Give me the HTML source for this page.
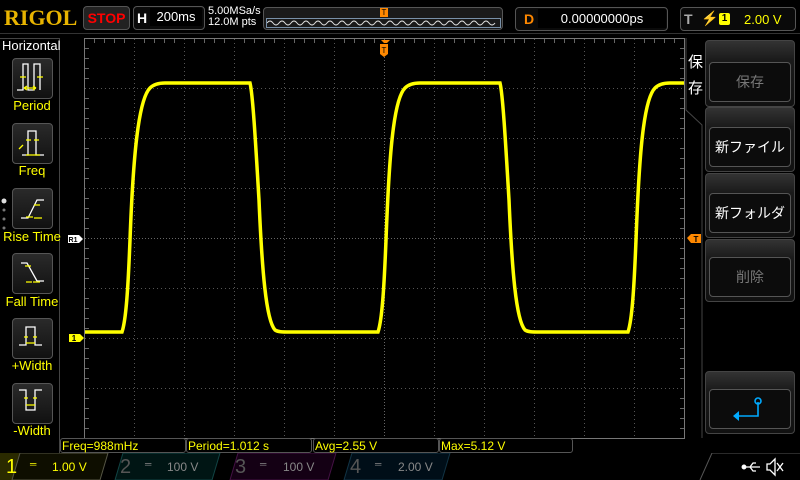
<!DOCTYPE html>
<html><head><meta charset="utf-8"><style>
body{margin:0;width:800px;height:480px;background:#000;overflow:hidden;position:relative;font-family:"Liberation Sans","Noto Sans CJK JP",sans-serif;}
.a{position:absolute;}
.box{position:absolute;border:1px solid #555;border-radius:4px;background:#0a0a0a;}
.lbtn{position:absolute;left:12px;width:39px;height:39px;border:1px solid #555;border-radius:4px;background:linear-gradient(#2a2a2a,#111);}
.llab{position:absolute;left:0;width:64px;text-align:center;color:#ff0;font-size:13px;}
.rbtn{position:absolute;left:705px;width:88px;border:1px solid #444;border-radius:4px;background:linear-gradient(#333,#1a1a1a 30%,#111);}
.rin{position:absolute;left:3px;right:3px;bottom:4px;height:38px;border:1px solid #555;border-radius:4px;background:#0c0c0c;color:#fff;font-size:14px;text-align:center;line-height:38px;}
.meas{position:absolute;top:438px;height:15px;border:1px solid #555;border-radius:3px;color:#ff0;font-size:12px;line-height:15px;padding-left:1px;box-sizing:border-box;}
.ch{position:absolute;top:455px;height:25px;font-size:12px;line-height:25px;}
</style></head><body>
<div class="a" style="left:4px;top:5px;color:#e8b400;font-family:'Liberation Serif',serif;font-weight:bold;font-size:22px;">RIGOL</div>
<div class="box" style="left:83px;top:6px;width:45px;height:22px;background:#222;color:#f00;font-weight:bold;font-size:14px;text-align:center;line-height:22px;">STOP</div>
<div class="box" style="left:133px;top:6px;width:70px;height:22px;"><span class="a" style="left:3px;top:3px;color:#fff;font-weight:bold;font-size:14px;">H</span><div class="a" style="left:16px;top:1px;width:52px;height:18px;background:#000;color:#fff;font-size:13px;line-height:18px;text-align:center;">200ms</div></div>
<div class="a" style="left:208px;top:6px;color:#fff;font-size:11px;line-height:11px;">5.00MSa/s<br>12.0M pts</div>
<div class="box" style="left:263px;top:7px;width:238px;height:21px;background:#1a1a1a;"></div>
<div class="a" style="left:266px;top:18px;width:233px;height:8px;border:1px solid #7890a8;"></div>
<svg class="a" style="left:267px;top:19px" width="232" height="7"><path d="M0,4 q3,-4 6,0 t6,0 t6,0 t6,0 t6,0 t6,0 t6,0 t6,0 t6,0 t6,0 t6,0 t6,0 t6,0 t6,0 t6,0 t6,0 t6,0 t6,0 t6,0 t6,0 t6,0 t6,0 t6,0 t6,0 t6,0 t6,0 t6,0 t6,0 t6,0 t6,0 t6,0 t6,0 t6,0 t6,0 t6,0 t6,0 t6,0 t6,0" stroke="#ddd" fill="none" stroke-width="1"/></svg>
<div class="a" style="left:380px;top:8px;width:8px;height:9px;background:#f80;color:#000;font-size:8px;text-align:center;line-height:9px;">T</div>
<div class="box" style="left:515px;top:7px;width:151px;height:22px;"><span class="a" style="left:8px;top:3px;color:#f80;font-weight:bold;font-size:14px;">D</span><div class="a" style="left:22px;top:1px;width:128px;height:19px;background:#000;color:#fff;font-size:13px;line-height:19px;text-align:center;">0.00000000ps</div></div>
<div class="box" style="left:680px;top:7px;width:114px;height:22px;"><span class="a" style="left:3px;top:3px;color:#aaa;font-weight:bold;font-size:14px;">T</span><span class="a" style="left:20px;top:2px;color:#ff0;font-size:14px;">⚡</span><span class="a" style="left:38px;top:5px;width:11px;height:12px;background:#ff0;border-radius:2px;color:#000;font-size:10px;text-align:center;line-height:12px;font-weight:bold;">1</span><span class="a" style="left:63px;top:4px;color:#ff0;font-size:13px;">2.00 V</span></div>
<div class="a" style="left:0;top:33px;width:800px;height:1px;background:#333;"></div>
<div class="a" style="left:0;top:38px;width:59px;height:416px;border:1px solid #444;border-left:none;"></div>
<div class="a" style="left:2px;top:38px;color:#fff;font-size:13px;">Horizontal</div>
<div class="lbtn" style="top:58px"></div><div class="llab" style="top:98px">Period</div>
<div class="lbtn" style="top:123px"></div><div class="llab" style="top:163px">Freq</div>
<div class="lbtn" style="top:188px"></div><div class="llab" style="top:229px">Rise Time</div>
<div class="lbtn" style="top:253px"></div><div class="llab" style="top:294px">Fall Time</div>
<div class="lbtn" style="top:318px"></div><div class="llab" style="top:358px">+Width</div>
<div class="lbtn" style="top:383px"></div><div class="llab" style="top:423px">-Width</div>
<svg class="a" style="left:0;top:0" width="60" height="440" fill="none" stroke-width="1.3">
<path d="M17,90 H23 V64 H28 V90 H34 V64 H40 V90" stroke="#fff"/><path d="M20,77h6M37,77h6" stroke="#ff0"/><path d="M24,88h12M24,88l3,-2M24,88l3,2M36,88l-3,-2M36,88l-3,2" stroke="#ff0"/>
<path d="M22,155 H28 V131 H36 V155 H44" stroke="#fff"/><path d="M26,140h5M34,140h5M26,155h14" stroke="#ff0"/><path d="M19,149l4,-4" stroke="#ff0"/>
<path d="M21,218 H28 L37,200 H44" stroke="#fff"/><path d="M26,217h7M34,205h6M34,218h8" stroke="#ff0"/>
<path d="M21,263 H27 L37,281 H44" stroke="#fff"/><path d="M25,266h6M33,282h7M26,282h6" stroke="#ff0"/>
<path d="M19,345 H26 V327 H35 V345 H42" stroke="#fff"/><path d="M24,337h4M33,337h4M26,343h9" stroke="#ff0"/>
<path d="M19,390 H26 V410 H35 V390 H42" stroke="#fff"/><path d="M24,398h4M33,398h4M26,405h9" stroke="#ff0"/>
<circle cx="4" cy="201" r="2.5" fill="#ddd" stroke="none"/><circle cx="4" cy="210" r="1.5" fill="#777" stroke="none"/><circle cx="4" cy="219" r="1.5" fill="#777" stroke="none"/><circle cx="4" cy="228" r="1.5" fill="#777" stroke="none"/>
</svg>
<svg class="a" style="left:0;top:0" width="800" height="480">
<rect x="84.5" y="38.5" width="600" height="400" fill="none" stroke="#777"/>
<g stroke="#555" stroke-dasharray="1,3">
<path d="M134.5,39V438M184.5,39V438M234.5,39V438M284.5,39V438M334.5,39V438M434.5,39V438M484.5,39V438M534.5,39V438M584.5,39V438M634.5,39V438"/>
<path d="M85,88.5H684M85,138.5H684M85,188.5H684M85,288.5H684M85,338.5H684M85,388.5H684"/>
</g>
<g stroke="#666" stroke-dasharray="1,2"><path d="M384.5,39V438M85,238.5H684"/></g>
<g stroke="#666">
<path d="M94.5,39v4M104.5,39v4M114.5,39v4M124.5,39v4M144.5,39v4M154.5,39v4M164.5,39v4M174.5,39v4M194.5,39v4M204.5,39v4M214.5,39v4M224.5,39v4M244.5,39v4M254.5,39v4M264.5,39v4M274.5,39v4M294.5,39v4M304.5,39v4M314.5,39v4M324.5,39v4M344.5,39v4M354.5,39v4M364.5,39v4M374.5,39v4M394.5,39v4M404.5,39v4M414.5,39v4M424.5,39v4M444.5,39v4M454.5,39v4M464.5,39v4M474.5,39v4M494.5,39v4M504.5,39v4M514.5,39v4M524.5,39v4M544.5,39v4M554.5,39v4M564.5,39v4M574.5,39v4M594.5,39v4M604.5,39v4M614.5,39v4M624.5,39v4M644.5,39v4M654.5,39v4M664.5,39v4M674.5,39v4"/>
<path d="M85,48.5h4M85,58.5h4M85,68.5h4M85,78.5h4M85,98.5h4M85,108.5h4M85,118.5h4M85,128.5h4M85,148.5h4M85,158.5h4M85,168.5h4M85,178.5h4M85,198.5h4M85,208.5h4M85,218.5h4M85,228.5h4M85,248.5h4M85,258.5h4M85,268.5h4M85,278.5h4M85,298.5h4M85,308.5h4M85,318.5h4M85,328.5h4M85,348.5h4M85,358.5h4M85,368.5h4M85,378.5h4M85,398.5h4M85,408.5h4M85,418.5h4M85,428.5h4"/>
<path d="M680,48.5h4M680,58.5h4M680,68.5h4M680,78.5h4M680,98.5h4M680,108.5h4M680,118.5h4M680,128.5h4M680,148.5h4M680,158.5h4M680,168.5h4M680,178.5h4M680,198.5h4M680,208.5h4M680,218.5h4M680,228.5h4M680,248.5h4M680,258.5h4M680,268.5h4M680,278.5h4M680,298.5h4M680,308.5h4M680,318.5h4M680,328.5h4M680,348.5h4M680,358.5h4M680,368.5h4M680,378.5h4M680,398.5h4M680,408.5h4M680,418.5h4M680,428.5h4"/>
</g>
<path d="M85,332 H122 C126,320 128,290 130,240 C133,160 138,100 150,88 C153,85 158,83 165,83 H250 C253,95 256,150 259,200 C262,270 266,320 275,330 C278,332 282,332 290,332 H378 C382,320 384,290 386,240 C389,160 393,100 405,88 C408,85 412,83 420,83 H500 C503,95 506,150 509,200 C512,270 516,320 525,330 C528,332 532,332 540,332 H628 C632,320 634,290 636,240 C639,160 643,100 655,88 C658,85 662,83 670,83 H684" fill="none" stroke="#ff0" stroke-width="3.5"/>
<path d="M378,40 h12 l-3,3 h-3 l-3,-3 z M380,44 h8 v10 l-4,3 l-4,-3 z" fill="#f80"/>
<text x="384" y="53" font-size="8" text-anchor="middle" fill="#000" font-family="Liberation Sans">T</text>
<path d="M68,235 h11 l4,4 l-4,4 h-11 z" fill="#fff"/><text x="73" y="242" font-size="7" text-anchor="middle" fill="#000" font-weight="bold" font-family="Liberation Sans">R1</text>
<path d="M69,334 h11 l4,4 l-4,4 h-11 z" fill="#ff0"/><text x="74" y="341" font-size="8" text-anchor="middle" fill="#000" font-weight="bold" font-family="Liberation Sans">1</text>
<path d="M687,238 l4,-4 h10 v9 h-10 z" fill="#f80"/><text x="696" y="242" font-size="8" text-anchor="middle" fill="#000" font-weight="bold" font-family="Liberation Sans">T</text>
<path d="M686,38 V110 L702,125 V438" fill="none" stroke="#444"/>
<!-- usb & speaker -->
<g stroke="#fff" fill="none" stroke-width="1.3">
<path d="M744,467 H760 M750,467 l3,-4 h3 M750,467 l3,4 h3"/>
<circle cx="744" cy="467" r="1.8" fill="#fff"/>
<path d="M767,464 h3 l5,-5 v16 l-5,-5 h-3 z"/>
<path d="M777,463 l6,8 M783,463 l-6,8"/>
</g>
</svg>
<div class="a" style="left:688px;top:50px;color:#fff;font-size:15px;line-height:26px;width:16px;">保<br>存</div>
<div class="rbtn" style="top:40px;height:65px;"><div class="rin" style="color:#777">保存</div></div>
<div class="rbtn" style="top:107px;height:63px;"><div class="rin">新ファイル</div></div>
<div class="rbtn" style="top:173px;height:63px;"><div class="rin">新フォルダ</div></div>
<div class="rbtn" style="top:239px;height:61px;"><div class="rin" style="color:#777">削除</div></div>
<div class="rbtn" style="top:371px;height:61px;"><div class="rin"><svg width="40" height="30" style="margin-top:4px"><path d="M28,8 V22 H6" stroke="#0af" stroke-width="1.6" fill="none"/><circle cx="28" cy="7" r="3" fill="none" stroke="#0af" stroke-width="1.6"/><path d="M3,22 l6,-5 v10z" fill="#0af"/></svg></div></div>
<div class="meas" style="left:60px;width:126px;">Freq=988mHz</div>
<div class="meas" style="left:186px;width:126px;">Period=1.012 s</div>
<div class="meas" style="left:313px;width:126px;">Avg=2.55 V</div>
<div class="meas" style="left:439px;width:134px;">Max=5.12 V</div>
<svg class="a" style="left:0;top:453px" width="800" height="27">
<path d="M0,0 L20,0 L12,27 L0,27z" fill="#2a2a00"/>
<path d="M20,0 H108 L100,27 H12z" fill="#0e0e00" stroke="#554" />
<path d="M123,0 H220 L212,27 H115z" fill="#001514" stroke="#144"/>
<path d="M238,0 H336 L328,27 H230z" fill="#140014" stroke="#414"/>
<path d="M352,0 H450 L442,27 H344z" fill="#000e18" stroke="#134"/>
<path d="M700,27 L712,0 H800" fill="none" stroke="#555"/>
</svg>
<div class="ch" style="left:6px;color:#ff0;font-size:20px;">1</div>
<div class="ch" style="left:30px;color:#ff0;font-size:9px;top:452px;">═</div>
<div class="ch" style="left:52px;color:#ff0;">1.00 V</div>
<div class="ch" style="left:120px;color:#555;font-size:20px;">2</div>
<div class="ch" style="left:145px;color:#888;font-size:9px;top:452px;">═</div>
<div class="ch" style="left:167px;color:#888;">100 V</div>
<div class="ch" style="left:235px;color:#555;font-size:20px;">3</div>
<div class="ch" style="left:260px;color:#888;font-size:9px;top:452px;">═</div>
<div class="ch" style="left:283px;color:#888;">100 V</div>
<div class="ch" style="left:350px;color:#555;font-size:20px;">4</div>
<div class="ch" style="left:375px;color:#888;font-size:9px;top:452px;">═</div>
<div class="ch" style="left:398px;color:#888;">2.00 V</div>
</body></html>
